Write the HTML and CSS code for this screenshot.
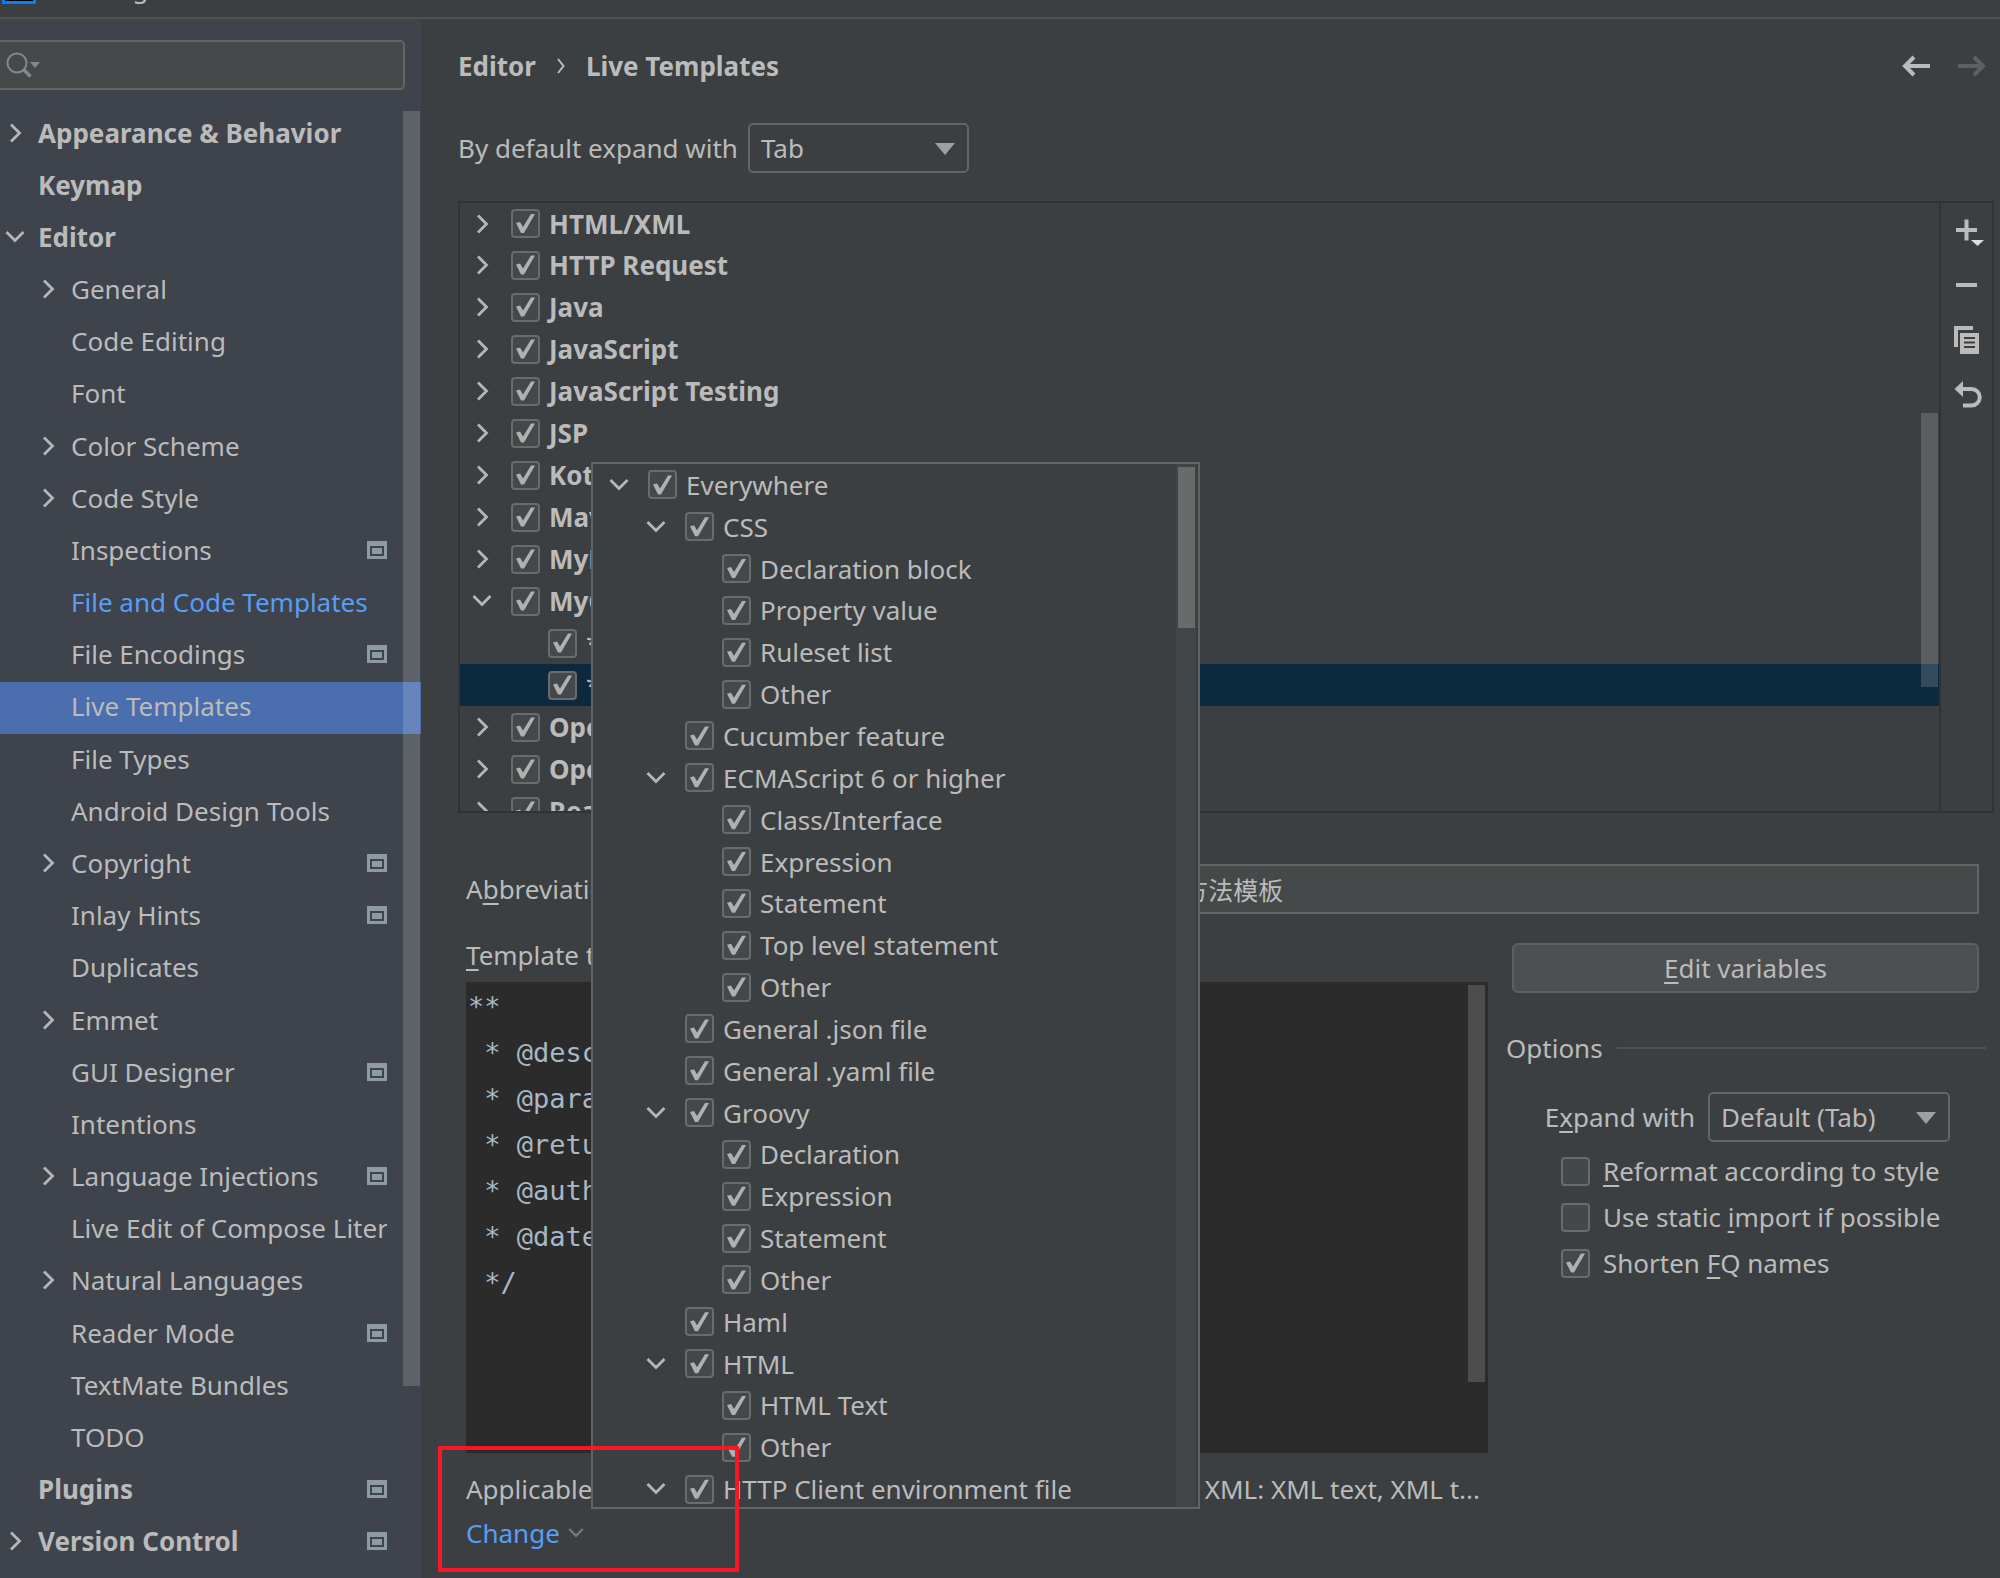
FILE: index.html
```html
<!DOCTYPE html>
<html lang="en">
  <head>
    <meta charset="utf-8">
    <title>Settings</title>
    <link rel="stylesheet" href="styles.css">
  </head>
  <body>
    <!-- Shared icons -->
    <svg class="sprite" xmlns="http://www.w3.org/2000/svg">
      <symbol id="right" viewBox="0 0 20 20"><path d="M6 1.5l8.5 8.5L6 18.5" fill="none" stroke="currentColor" stroke-width="2.8"/></symbol>
      <symbol id="down" viewBox="0 0 20 20"><path d="M1.5 5l8.5 8.5L18.5 5" fill="none" stroke="currentColor" stroke-width="2.8"/></symbol>
      <symbol id="project" viewBox="0 0 20 18"><path d="M0 0h20v18H0zM3 5v10h14V5z" fill="currentColor" fill-rule="evenodd"/><path d="M5 7h10v6H5z" fill="currentColor"/></symbol>
    </svg>

    <header class="titlebar">
      <div class="titlebar-content"><span class="logo"></span><span>Settings</span></div>
    </header>

    <div class="window">
      <aside class="sidebar">
        <div class="search">
          <svg width="36" height="28" viewBox="0 0 36 28"><circle cx="12" cy="12" r="9.5" fill="none" stroke="#7d8a90" stroke-width="2"/><path d="M18.5 18.5l7 7" stroke="#7d8a90" stroke-width="3.5"/><path d="M25 11h10l-5 6z" fill="#7d8a90"/></svg>
          <input type="text" aria-label="Search settings">
        </div>
        <nav class="nav">
          <a href="#" class="top"><svg class="chevron"><use href="#right"/></svg>Appearance &amp; Behavior</a>
          <a href="#" class="top leaf">Keymap</a>
          <a href="#" class="top"><svg class="chevron"><use href="#down"/></svg>Editor</a>
          <a href="#"><svg class="chevron"><use href="#right"/></svg>General</a>
          <a href="#" class="leaf">Code Editing</a>
          <a href="#" class="leaf">Font</a>
          <a href="#"><svg class="chevron"><use href="#right"/></svg>Color Scheme</a>
          <a href="#"><svg class="chevron"><use href="#right"/></svg>Code Style</a>
          <a href="#" class="leaf">Inspections<svg class="project"><use href="#project"/></svg></a>
          <a href="#" class="leaf modified">File and Code Templates</a>
          <a href="#" class="leaf">File Encodings<svg class="project"><use href="#project"/></svg></a>
          <a href="#" class="leaf selected">Live Templates</a>
          <a href="#" class="leaf">File Types</a>
          <a href="#" class="leaf">Android Design Tools</a>
          <a href="#"><svg class="chevron"><use href="#right"/></svg>Copyright<svg class="project"><use href="#project"/></svg></a>
          <a href="#" class="leaf">Inlay Hints<svg class="project"><use href="#project"/></svg></a>
          <a href="#" class="leaf">Duplicates</a>
          <a href="#"><svg class="chevron"><use href="#right"/></svg>Emmet</a>
          <a href="#" class="leaf">GUI Designer<svg class="project"><use href="#project"/></svg></a>
          <a href="#" class="leaf">Intentions</a>
          <a href="#"><svg class="chevron"><use href="#right"/></svg>Language Injections<svg class="project"><use href="#project"/></svg></a>
          <a href="#" class="leaf"><span class="cut">Live Edit of Compose Literals</span></a>
          <a href="#"><svg class="chevron"><use href="#right"/></svg>Natural Languages</a>
          <a href="#" class="leaf">Reader Mode<svg class="project"><use href="#project"/></svg></a>
          <a href="#" class="leaf">TextMate Bundles</a>
          <a href="#" class="leaf">TODO</a>
          <a href="#" class="top leaf">Plugins<svg class="project"><use href="#project"/></svg></a>
          <a href="#" class="top"><svg class="chevron"><use href="#right"/></svg>Version Control<svg class="project"><use href="#project"/></svg></a>
          <span class="thumb"></span>
        </nav>
      </aside>

      <main class="main">
        <div class="breadcrumb">
          <b>Editor</b>
          <svg width="8" height="18" viewBox="0 0 8 18"><path d="M1 2l5.500 7L1 16" fill="none" stroke="#bbb" stroke-width="2"/></svg>
          <b>Live Templates</b>
          <span class="history">
            <button aria-label="Back"><svg width="28" height="22" viewBox="0 0 28 22"><path d="M28 11H3M12 2l-9 9 9 9" fill="none" stroke="#bbb" stroke-width="4"/></svg></button>
            <button aria-label="Forward" disabled><svg width="28" height="22" viewBox="0 0 28 22"><path d="M0 11h25M16 2l9 9-9 9" fill="none" stroke="#5d5f60" stroke-width="4"/></svg></button>
          </span>
        </div>

        <div class="expand">
          <label for="expandKey">By default expand with</label>
          <span class="select"><select id="expandKey"><option>Tab</option></select></span>
        </div>

        <div class="templates">
          <ul class="tree">
            <li><svg class="chevron"><use href="#right"/></svg><label><input type="checkbox" checked>HTML/XML</label></li>
            <li><svg class="chevron"><use href="#right"/></svg><label><input type="checkbox" checked>HTTP Request</label></li>
            <li><svg class="chevron"><use href="#right"/></svg><label><input type="checkbox" checked>Java</label></li>
            <li><svg class="chevron"><use href="#right"/></svg><label><input type="checkbox" checked>JavaScript</label></li>
            <li><svg class="chevron"><use href="#right"/></svg><label><input type="checkbox" checked>JavaScript Testing</label></li>
            <li><svg class="chevron"><use href="#right"/></svg><label><input type="checkbox" checked>JSP</label></li>
            <li><svg class="chevron"><use href="#right"/></svg><label><input type="checkbox" checked>Kotlin</label></li>
            <li><svg class="chevron"><use href="#right"/></svg><label><input type="checkbox" checked>Maven</label></li>
            <li><svg class="chevron"><use href="#right"/></svg><label><input type="checkbox" checked>MyBatis</label></li>
            <li><svg class="chevron"><use href="#down"/></svg><label><input type="checkbox" checked>MyGroup</label></li>
            <li class="level1 leaf"><label><input type="checkbox" checked>*</label></li>
            <li class="level1 leaf selected"><label><input type="checkbox" checked>*</label></li>
            <li><svg class="chevron"><use href="#right"/></svg><label><input type="checkbox" checked>OpenAPI</label></li>
            <li><svg class="chevron"><use href="#right"/></svg><label><input type="checkbox" checked>OpenAPI</label></li>
            <li><svg class="chevron"><use href="#right"/></svg><label><input type="checkbox" checked>React</label></li>
          </ul>
          <span class="thumb"></span>
          <div class="toolbar">
            <button aria-label="Add"><svg width="30" height="30" viewBox="0 0 30 30"><path d="M1 12h21M11.500 1.500v21" stroke="#bbb" stroke-width="4" fill="none"/><path d="M16 22h13l-6.500 6z" fill="#ddd"/></svg></button>
            <button aria-label="Remove"><svg width="30" height="30" viewBox="0 0 30 30"><path d="M1 13h21" stroke="#bbb" stroke-width="4"/></svg></button>
            <button aria-label="Duplicate"><svg width="30" height="30" viewBox="0 0 30 30"><path d="M-1 0h19v4H3v17h-4z" fill="#bbb"/><path d="M5 7h19v21H5zM9 11v2h11v-2zM9 15.500v2h11v-2zM9 20v2h11v-2z" fill="#bbb" fill-rule="evenodd"/></svg></button>
            <button aria-label="Restore"><svg width="30" height="30" viewBox="0 0 30 30"><path d="M4 9h12.500a8 8 0 0 1 0 16.500H8" fill="none" stroke="#bbb" stroke-width="4"/><path d="M-.5 9L8 1v16z" fill="#bbb"/></svg></button>
          </div>
        </div>

        <div class="fields">
          <label for="abbreviation">A<u>b</u>breviation:</label>
          <input type="text" id="abbreviation" class="abbreviation" value="*">
          <label for="description">Description:</label>
          <input type="text" id="description" class="description" value="方法模板">
        </div>

        <div class="details">
          <div class="template">
            <label class="template-label" for="templateText"><u>T</u>emplate text:</label>
            <div class="editor">
              <textarea id="templateText" spellcheck="false">**
 * @description
 * @params
 * @return
 * @author
 * @date
 */</textarea>
              <span class="thumb"></span>
            </div>
            <div class="contexts"><span>Applicable in</span><span>XML: XML text, XML t...</span></div>
            <a href="#" class="change">Change<svg width="16" height="16"><use href="#down"/></svg></a>
          </div>

          <div class="options">
            <button class="edit"><u>E</u>dit variables</button>
            <div class="options-title">Options</div>
            <div class="option-expand">
              <label for="optionKey">E<u>x</u>pand with</label>
              <span class="select wide"><select id="optionKey"><option>Default (Tab)</option></select></span>
            </div>
            <label class="option"><input type="checkbox"><span><u>R</u>eformat according to style</span></label>
            <label class="option"><input type="checkbox"><span>Use static <u>i</u>mport if possible</span></label>
            <label class="option"><input type="checkbox" checked><span>Shorten <u>F</u>Q names</span></label>
          </div>
        </div>
      </main>
    </div>

    <!-- Context popup, opened from the Change link -->
    <div class="popup">
      <ul class="tree">
        <li><svg class="chevron"><use href="#down"/></svg><label><input type="checkbox" checked>Everywhere</label></li>
        <li class="level1"><svg class="chevron"><use href="#down"/></svg><label><input type="checkbox" checked>CSS</label></li>
        <li class="level2 leaf"><label><input type="checkbox" checked>Declaration block</label></li>
        <li class="level2 leaf"><label><input type="checkbox" checked>Property value</label></li>
        <li class="level2 leaf"><label><input type="checkbox" checked>Ruleset list</label></li>
        <li class="level2 leaf"><label><input type="checkbox" checked>Other</label></li>
        <li class="level1 leaf"><label><input type="checkbox" checked>Cucumber feature</label></li>
        <li class="level1"><svg class="chevron"><use href="#down"/></svg><label><input type="checkbox" checked>ECMAScript 6 or higher</label></li>
        <li class="level2 leaf"><label><input type="checkbox" checked>Class/Interface</label></li>
        <li class="level2 leaf"><label><input type="checkbox" checked>Expression</label></li>
        <li class="level2 leaf"><label><input type="checkbox" checked>Statement</label></li>
        <li class="level2 leaf"><label><input type="checkbox" checked>Top level statement</label></li>
        <li class="level2 leaf"><label><input type="checkbox" checked>Other</label></li>
        <li class="level1 leaf"><label><input type="checkbox" checked>General .json file</label></li>
        <li class="level1 leaf"><label><input type="checkbox" checked>General .yaml file</label></li>
        <li class="level1"><svg class="chevron"><use href="#down"/></svg><label><input type="checkbox" checked>Groovy</label></li>
        <li class="level2 leaf"><label><input type="checkbox" checked>Declaration</label></li>
        <li class="level2 leaf"><label><input type="checkbox" checked>Expression</label></li>
        <li class="level2 leaf"><label><input type="checkbox" checked>Statement</label></li>
        <li class="level2 leaf"><label><input type="checkbox" checked>Other</label></li>
        <li class="level1 leaf"><label><input type="checkbox" checked>Haml</label></li>
        <li class="level1"><svg class="chevron"><use href="#down"/></svg><label><input type="checkbox" checked>HTML</label></li>
        <li class="level2 leaf"><label><input type="checkbox" checked>HTML Text</label></li>
        <li class="level2 leaf"><label><input type="checkbox" checked>Other</label></li>
        <li class="level1"><svg class="chevron"><use href="#down"/></svg><label><input type="checkbox" checked>HTTP Client environment file</label></li>
      </ul>
      <div class="track"><span class="thumb"></span></div>
    </div>
    <div class="highlight"></div>
  </body>
</html>
```

FILE: styles.css
```css
* {
  box-sizing: border-box;
}
body {
  position: relative;
  display: flex;
  flex-direction: column;
  min-height: 100vh;
  margin: 0;
  overflow: hidden;
  background-color: #3c3f41;
  color: #bbbbbb;
  font-family: "Noto Sans", "Noto Sans CJK SC", sans-serif;
  font-size: 26px;
  line-height: 36px;
}
input, select, button, textarea {
  font: inherit;
  color: inherit;
}
button {
  padding: 0;
  border: none;
  background: none;
}
u {
  text-decoration-thickness: 2px;
  text-underline-offset: 4px;
}
ul {
  margin: 0;
  padding: 0;
  list-style: none;
}
.sprite {
  display: none;
}
.chevron {
  flex: none;
  width: 20px;
  height: 20px;
  color: #b4b6b8;
}
.thumb {
  position: absolute;
  width: 17px;
  background-color: rgba(255, 255, 255, 0.16);
}

/* Title bar */
.titlebar {
  flex: none;
  height: 19px;
  overflow: hidden;
  border-bottom: 2px solid #515151;
}
.titlebar-content {
  display: flex;
  gap: 26px;
  margin-top: -30px;
  padding-left: 2px;
}
.logo {
  width: 34px;
  height: 34px;
  border: 3px solid #087cfa;
  background-color: #000;
}
.window {
  flex: 1;
  display: flex;
}

/* Sidebar */
.sidebar {
  flex: none;
  display: flex;
  flex-direction: column;
  width: 421px;
  background-color: #3e434c;
}
.search {
  display: flex;
  align-items: center;
  height: 50px;
  margin: 21px 16px 18px 0;
  padding-left: 5px;
  border: 2px solid #646464;
  border-left: none;
  border-radius: 0 5px 5px 0;
  background-color: #45494a;
}
.search input {
  flex: 1;
  min-width: 0;
  border: none;
  background: none;
}
.nav {
  position: relative;
  flex: 1;
  display: flex;
  flex-direction: column;
  padding-bottom: 9px;
}
.nav a {
  flex: 1;
  display: flex;
  align-items: center;
  padding: 0 34px 3px 38px;
  color: inherit;
  text-decoration: none;
  white-space: nowrap;
}
.nav .chevron {
  margin-right: 13px;
}
.nav .leaf {
  padding-left: 71px;
}
.nav .top {
  padding-left: 5px;
  font-weight: bold;
}
.nav .top.leaf {
  padding-left: 38px;
}
.nav .modified {
  color: #589df6;
}
.nav .selected {
  background-color: #4b6eaf;
}
.nav .cut {
  overflow: hidden;
}
.project {
  width: 20px;
  height: 18px;
  margin-left: auto;
  color: #8f9ba3;
}
.nav .thumb {
  top: 3px;
  right: 1px;
  height: 1275px;
}

/* Right side */
.main {
  flex: 1;
  display: flex;
  flex-direction: column;
  padding: 0 6px 0 37px;
}
.breadcrumb {
  display: flex;
  align-items: center;
  gap: 21px;
  height: 93px;
}
.history {
  display: flex;
  gap: 28px;
  margin: 0 8px 0 auto;
}
.history button, .history svg {
  display: block;
}
.expand {
  display: flex;
  align-items: center;
  gap: 10px;
  margin: 11px 0 28px;
}
.select {
  position: relative;
  width: 221px;
}
.select select {
  appearance: none;
  display: block;
  width: 100%;
  height: 50px;
  padding: 0 11px;
  border: 2px solid #646464;
  border-radius: 5px;
  background-color: #3c3f41;
}
.select::after {
  content: "";
  position: absolute;
  top: 20px;
  right: 14px;
  border: 10px solid transparent;
  border-top: 12px solid #9da0a2;
  border-bottom: none;
}
.select.wide {
  width: 242px;
}

/* Checkbox */
input[type="checkbox"] {
  appearance: none;
  flex: none;
  width: 29px;
  height: 29px;
  margin: 0;
  border: 2px solid #6b6b6b;
  border-radius: 4px;
  background-color: #43494a;
}
input[type="checkbox"]:checked::before {
  content: "";
  display: block;
  width: 25px;
  height: 25px;
  background-color: #b0b0b0;
  clip-path: polygon(3px 12px, 7px 11px, 10px 16px, 18px 3px, 22px 3px, 11px 22px, 8px 22px);
}

/* Trees with checkboxes */
.tree li {
  display: flex;
  align-items: center;
  gap: 19px;
  height: 42px;
  padding-left: 12px;
  white-space: nowrap;
}
.tree label {
  display: flex;
  align-items: center;
  gap: 9px;
}
.tree .level1 {
  padding-left: 49px;
}
.tree .leaf label {
  margin-left: 39px;
}
.templates {
  position: relative;
  display: flex;
  height: 612px;
  border: 2px solid #323232;
  font-weight: bold;
}
.templates .tree {
  flex: 1;
  overflow: hidden;
}
.templates .level1 {
  font-weight: normal;
}
.templates .tree li:first-child {
  height: 41px;
}
.templates .selected {
  background-color: #0d293e;
}
.templates .thumb {
  top: 210px;
  right: 54px;
  height: 274px;
}
.toolbar {
  display: flex;
  flex-direction: column;
  gap: 24px;
  width: 53px;
  padding: 15px 0 0 14px;
  border-left: 2px solid #323232;
}
.toolbar svg {
  display: block;
  overflow: visible;
}

/* Template form */
.fields {
  display: flex;
  align-items: center;
  gap: 16px;
  margin: 51px 15px 29px 8px;
}
.fields input {
  height: 50px;
  padding: 0 8px;
  border: 2px solid #646464;
  background-color: #45494a;
}
.abbreviation {
  width: 350px;
}
.fields .description {
  flex: 1;
  min-width: 0;
  font-size: 25px;
}
.details {
  display: flex;
  gap: 18px;
}
.template {
  flex: 1;
  padding-left: 8px;
}
.template-label {
  display: block;
  height: 39px;
  line-height: 24px;
}
.editor {
  position: relative;
  height: 471px;
  background-color: #2b2b2b;
}
.editor textarea {
  display: block;
  width: 100%;
  height: 100%;
  padding: 2px;
  border: none;
  outline: none;
  resize: none;
  background: none;
  color: #a9b7c6;
  font-family: "DejaVu Sans Mono", monospace;
  font-size: 27px;
  line-height: 46px;
}
.editor .thumb {
  top: 3px;
  right: 3px;
  height: 397px;
}
.contexts {
  display: flex;
  justify-content: space-between;
  margin: 18px 8px 8px 0;
}
.change {
  display: inline-flex;
  align-items: center;
  gap: 8px;
  color: #589df6;
  text-decoration: none;
}
.change svg {
  color: #757c80;
}
.options {
  width: 488px;
}
.edit {
  display: block;
  width: 467px;
  height: 50px;
  margin-left: 6px;
  border: 2px solid #5e6060;
  border-radius: 6px;
  background-color: #4c5052;
}
.options-title {
  display: flex;
  align-items: center;
  gap: 14px;
  margin: 37px 8px 26px 0;
}
.options-title::after {
  content: "";
  flex: 1;
  height: 2px;
  background-color: #515151;
}
.option-expand {
  display: flex;
  align-items: center;
  justify-content: flex-end;
  gap: 13px;
  margin: 0 44px 6px 0;
}
.option {
  display: flex;
  align-items: center;
  gap: 13px;
  height: 46px;
  padding-left: 55px;
  white-space: nowrap;
}

/* Popup */
.popup {
  position: absolute;
  top: 462px;
  left: 591px;
  display: flex;
  width: 609px;
  height: 1047px;
  border: 2px solid #616365;
  background-color: #3c3f41;
}
.popup .tree {
  flex: 1;
  display: flex;
  flex-direction: column;
  margin-bottom: -3px;
}
.popup .tree li {
  flex: 1;
  padding-left: 16px;
}
.popup .tree .level1 {
  padding-left: 53px;
}
.popup .tree .level2 {
  padding-left: 90px;
}
.track {
  position: relative;
  width: 20px;
  margin-right: 2px;
  background-color: #424546;
}
.track .thumb {
  top: 3px;
  right: 1px;
  height: 161px;
  background-color: #696b6b;
}
.highlight {
  position: absolute;
  top: 1446px;
  left: 438px;
  width: 301px;
  height: 126px;
  border: 4px solid #fa1622;
  pointer-events: none;
}
```
